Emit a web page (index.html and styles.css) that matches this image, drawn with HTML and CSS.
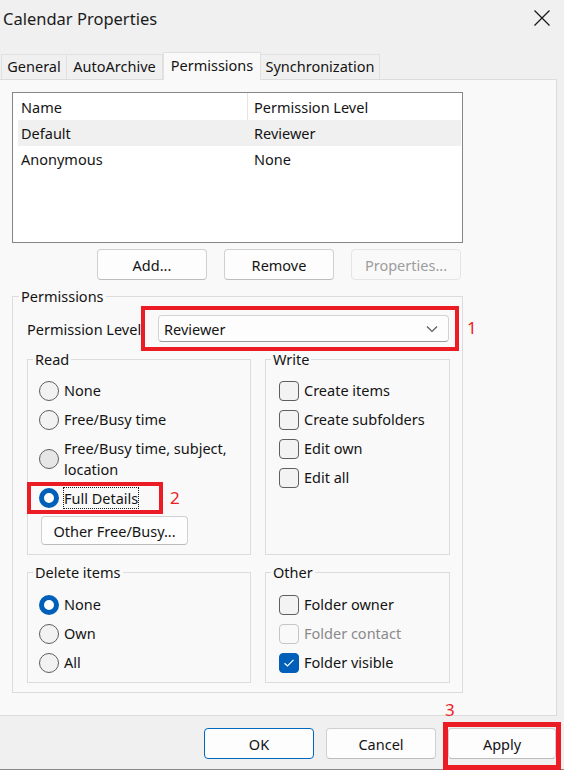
FILE: index.html
```html
<!DOCTYPE html>
<html>
<head>
<meta charset="utf-8">
<title>Calendar Properties</title>
<link rel="stylesheet" href="styles.css">
</head>
<body>
<div class="window">
  <div class="titlebar">
    <span class="title">Calendar Properties</span>
    <svg class="close" width="16" height="16" viewBox="0 0 16 16"><path d="M0.5 0.5L15.5 15.5M15.5 0.5L0.5 15.5"/></svg>
  </div>

  <div class="tabs">
    <div class="tab t-general">General</div>
    <div class="tab t-auto">AutoArchive</div>
    <div class="tab t-perm active">Permissions</div>
    <div class="tab t-sync">Synchronization</div>
  </div>

  <div class="panel">
    <div class="list">
      <div class="row head"><div class="c1">Name</div><div class="c2">Permission Level</div></div>
      <div class="row sel"><div class="c1">Default</div><div class="c2">Reviewer</div></div>
      <div class="row"><div class="c1">Anonymous</div><div class="c2">None</div></div>
    </div>

    <div class="btnrow">
      <button class="btn">Add...</button>
      <button class="btn">Remove</button>
      <button class="btn disabled">Properties...</button>
    </div>

    <fieldset class="group perms">
      <legend>Permissions</legend>
      <div class="levelrow">
        <span class="label">Permission Level</span>
        <div class="combo">
          <span>Reviewer</span>
          <svg class="chev" width="12" height="8" viewBox="0 0 12 8"><path d="M1 1.5L6 6.5L11 1.5"/></svg>
        </div>
        <div class="mark mark1"></div>
        <span class="num num1">1</span>
      </div>

      <div class="grid">
        <fieldset class="group sub read">
          <legend>Read</legend>
          <div class="opt"><span class="radio"></span><span class="txt">None</span></div>
          <div class="opt"><span class="radio"></span><span class="txt">Free/Busy time</span></div>
          <div class="opt"><span class="radio hover"></span><span class="txt">Free/Busy time, subject,<br>location</span></div>
          <div class="opt focus-opt"><span class="radio on"></span><span class="txt focus">Full Details</span>
            <div class="mark mark2"></div>
            <span class="num num2">2</span>
          </div>
          <button class="btn other">Other Free/Busy...</button>
        </fieldset>

        <fieldset class="group sub write">
          <legend>Write</legend>
          <div class="opt"><span class="check"></span><span class="txt">Create items</span></div>
          <div class="opt"><span class="check"></span><span class="txt">Create subfolders</span></div>
          <div class="opt"><span class="check"></span><span class="txt">Edit own</span></div>
          <div class="opt"><span class="check"></span><span class="txt">Edit all</span></div>
        </fieldset>

        <fieldset class="group sub del">
          <legend>Delete items</legend>
          <div class="opt"><span class="radio on"></span><span class="txt">None</span></div>
          <div class="opt"><span class="radio"></span><span class="txt">Own</span></div>
          <div class="opt"><span class="radio"></span><span class="txt">All</span></div>
        </fieldset>

        <fieldset class="group sub write del">
          <legend>Other</legend>
          <div class="opt"><span class="check"></span><span class="txt">Folder owner</span></div>
          <div class="opt dis"><span class="check"></span><span class="txt">Folder contact</span></div>
          <div class="opt"><span class="check on"><svg width="12" height="10" viewBox="0 0 12 10"><path d="M1.5 5.2L4.5 8L10.5 1.8"/></svg></span><span class="txt">Folder visible</span></div>
        </fieldset>
      </div>
    </fieldset>
  </div>

  <div class="footer">
    <button class="btn big default">OK</button>
    <button class="btn big">Cancel</button>
    <div class="applywrap">
      <button class="btn big apply">Apply</button>
      <div class="mark mark3"></div>
      <span class="num num3">3</span>
    </div>
  </div>
</div>
</body>
</html>
```

FILE: styles.css
```css
* { box-sizing: border-box; }
html, body { margin: 0; padding: 0; }
body {
  width: 564px;
  height: 770px;
  overflow: hidden;
  background: #f0f0f0;
  font-family: "Noto Sans", "Open Sans", sans-serif;
  font-size: 14.5px;
  color: #141414;
}
.window {
  width: 564px;
  height: 770px;
  border-bottom: 1px solid #8a8a8a;
  position: relative;
}
.titlebar {
  height: 36px;
  display: flex;
  align-items: center;
  justify-content: space-between;
  padding: 0 14px 0 3px;
}
.title { font-size: 16.5px; color: #1b1b1b; }
.close { stroke: #1b1b1b; stroke-width: 1.3; fill: none; }

.tabs {
  margin-top: 16px;
  height: 27px;
  display: flex;
  align-items: flex-end;
  padding-left: 1px;
}
.tab {
  height: 25px;
  line-height: 23px;
  text-align: center;
  border: 1px solid #e0e0e0;
  border-bottom: none;
  background: #f0f0f0;
  white-space: nowrap;
}
.t-general { width: 66px; }
.t-auto { width: 96px; border-left: none; }
.t-perm { width: 98px; }
.t-sync { width: 119px; border-left: none; }
.tab.active {
  height: 28px;
  line-height: 24px;
  background: #f9f9f9;
  margin-bottom: -1px;
  position: relative;
  z-index: 1;
}

.panel {
  width: 557px;
  height: 637px;
  background: #f9f9f9;
  border: 1px solid #dcdcdc;
  border-left: none;
  padding: 12px 0 0 12px;
}

.list {
  width: 451px;
  height: 151px;
  background: #fff;
  border: 1px solid #868686;
  padding: 0 1px 0 5px;
}
.row {
  display: flex;
  height: 26px;
  align-items: center;
}
.row.head { height: 27px; }
.row.sel { background: #f0f0f0; }
.c1 { width: 230px; padding-left: 3px; height: 100%; display: flex; align-items: center; }
.c2 { flex: 1; padding-left: 6px; height: 100%; display: flex; align-items: center; }
.head .c1 { border-right: 1px solid #e5e5e5; }

.btnrow {
  width: 449px;
  display: flex;
  justify-content: flex-end;
  gap: 17px;
  margin-top: 6px;
}
.btn {
  font-family: inherit;
  font-size: 14.5px;
  color: #141414;
  background: #fdfdfd;
  border: 1px solid #d0d0d0;
  border-bottom-color: #bdbdbd;
  border-radius: 4px;
  width: 110px;
  height: 31px;
  padding: 0;
}
.btn.disabled { color: #9d9d9d; border-color: #e5e5e5; background: #f9f9f9; }

.group {
  border: 1px solid #dcdcdc;
  margin: 0;
  padding: 0;
  min-width: 0;
}
.group legend {
  padding: 0 2px;
  line-height: 20px;
}
.perms {
  width: 451px;
  margin-top: 6px;
  padding: 9px 13px 9px 14px;
}
.perms > legend { margin-left: -8px; }
.levelrow {
  display: flex;
  align-items: center;
  position: relative;
  height: 27px;
}
.label { width: 131px; white-space: nowrap; }
.combo {
  width: 291px;
  height: 27px;
  background: #fdfdfd;
  border: 1px solid #d3d3d3;
  border-bottom-color: #9a9a9a;
  border-radius: 4px;
  display: flex;
  align-items: center;
  justify-content: space-between;
  padding: 0 10px 0 5px;
}
.chev { stroke: #5a5a5a; stroke-width: 1.2; fill: none; }

.mark {
  position: absolute;
  border: 4px solid #ec1c24;
  pointer-events: none;
}
.mark1 { left: 114px; top: -9px; width: 318px; height: 45px; }
.num {
  position: absolute;
  color: #ec1c24;
  font-size: 17px;
  line-height: 20px;
}
.num1 { left: 440px; top: 3px; }

.grid {
  display: grid;
  grid-template-columns: 224px 185px;
  column-gap: 14px;
  row-gap: 7px;
  margin-top: 7px;
}
.sub { padding: 7px 0 9px 11px; }
.sub > legend { margin-left: -6px; }
.sub.write { padding-left: 13px; }
.sub.write > legend { margin-left: -8px; }
.sub.del { padding-top: 8px; padding-bottom: 5px; }

.opt {
  display: flex;
  align-items: center;
  padding: 4px 0;
  line-height: 21px;
  position: relative;
}
.opt .txt { margin-left: 5px; }
.radio {
  width: 20px;
  height: 20px;
  border-radius: 50%;
  border: 1px solid #5f5f5f;
  background: #f2f2f2;
  flex: none;
}
.radio.hover { background: #e6e6e6; }
.radio.on {
  background: #fff;
  border: 5.5px solid #005fb8;
}
.check {
  width: 20px;
  height: 20px;
  border-radius: 4px;
  border: 1px solid #5f5f5f;
  background: #f3f3f3;
  flex: none;
  display: flex;
  align-items: center;
  justify-content: center;
}
.check.on { background: #005fb8; border-color: #005fb8; }
.check svg { stroke: #fff; stroke-width: 1.2; fill: none; }
.opt.dis .check { border-color: #c5c5c5; background: #f9f9f9; }
.opt.dis .txt { color: #8a8a8a; }
.txt.focus { outline: 1px dotted #1a1a1a; outline-offset: 0; line-height: 20px; }

.mark2 { left: -12px; top: -2px; width: 136px; height: 32px; border-width: 4px; }
.num2 { left: 131px; top: 4px; }

.btn.other {
  width: 147px;
  height: 29px;
  margin-top: 4px;
  margin-left: 2px;
}

.footer {
  height: 55px;
  display: flex;
  align-items: center;
  padding-left: 204px;
  gap: 12px;
}
.btn.big { height: 31px; width: 110px; }
.btn.default { border: 1px solid #0067c0; }
.applywrap { position: relative; display: flex; }
.btn.apply { width: 108px; }
.mark3 { left: -5px; top: -6px; width: 118px; height: 48px; border-width: 5px; }
.num3 { left: -3px; top: -28px; }
```
